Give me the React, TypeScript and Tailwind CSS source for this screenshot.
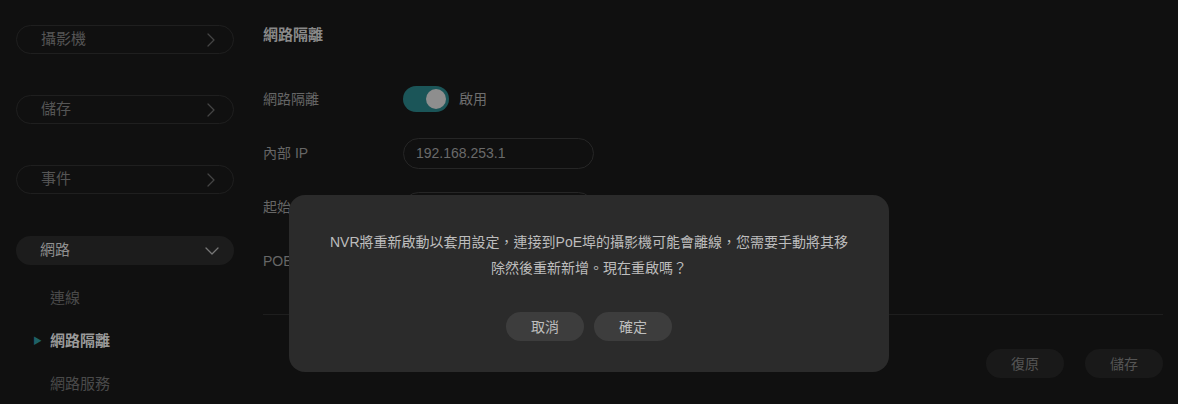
import React from 'react';
import { ChevronRight, ChevronDown } from 'lucide-react';

const font = { fontFamily: '"Liberation Sans", "Noto Sans CJK TC", sans-serif' };

function NavGroup({ label, open }: { label: string; open?: boolean }) {
  return (
    <div
      className={`mx-4 h-[29px] rounded-full flex items-center justify-between pl-6 pr-[10px] ${open ? 'bg-[#1c1c1c]' : 'border border-[#1f1f1f]'}`}
    >
      <span className={`text-[15px] ${open ? 'text-[#8f8f8f]' : 'text-[#555]'}`}>{label}</span>
      {open ? (
        <ChevronDown className="w-6 h-6 text-[#777]" strokeWidth={1.3} />
      ) : (
        <ChevronRight className="w-6 h-6 text-[#444]" strokeWidth={1.3} />
      )}
    </div>
  );
}

function SubItem({ label, active }: { label: string; active?: boolean }) {
  return (
    <div className="h-[43px] flex items-center pl-[33px]">
      <span className={`w-[17px] text-[9px] ${active ? 'text-[#1e6166]' : 'text-transparent'}`}>▶</span>
      <span className={`text-[15px] ${active ? 'text-[#9a9a9a] font-bold' : 'text-[#4a4a4a]'}`}>{label}</span>
    </div>
  );
}

function FieldRow({ label, children }: { label: string; children?: React.ReactNode }) {
  return (
    <div className="h-[54px] flex items-center">
      <span className="w-[140px] text-sm text-[#666]">{label}</span>
      {children}
    </div>
  );
}

export default function App() {
  return (
    <div className="relative w-[1178px] h-[404px] overflow-hidden bg-[#101010]" style={font}>
      <div className="flex h-full">
        {/* Sidebar */}
        <div className="w-[250px] shrink-0 pt-[25px]">
          <NavGroup label="攝影機" />
          <div className="h-[41px]" />
          <NavGroup label="儲存" />
          <div className="h-[41px]" />
          <NavGroup label="事件" />
          <div className="h-[42px]" />
          <NavGroup label="網路" open />
          <div className="h-[12px]" />
          <SubItem label="連線" />
          <SubItem label="網路隔離" active />
          <SubItem label="網路服務" />
        </div>

        {/* Main */}
        <div className="flex-1 pl-[13px] pr-[15px]">
          <div className="h-[72px] pt-[24px] text-[15px] font-bold text-[#8a8a8a]">網路隔離</div>
          <FieldRow label="網路隔離">
            <div className="w-[46px] h-[26px] rounded-full bg-[#1b5558] flex items-center justify-end pr-[3px]">
              <div className="w-[20px] h-[20px] rounded-full bg-[#8e8e8e]" />
            </div>
            <span className="ml-[10px] text-sm text-[#6e6e6e]">啟用</span>
          </FieldRow>
          <FieldRow label="內部 IP">
            <div className="w-[191px] h-[31px] rounded-full border border-[#262626] flex items-center px-3 text-sm text-[#6a6a6a]">
              192.168.253.1
            </div>
          </FieldRow>
          <FieldRow label="起始 IP">
            <div className="w-[191px] h-[31px] rounded-full border border-[#262626]" />
          </FieldRow>
          <FieldRow label="POE 埠">
            <div className="w-[191px] h-[31px]" />
          </FieldRow>
          <div className="mt-[26px] border-t border-[#1e1e1e]" />
          <div className="flex justify-end gap-[21px] pt-[34px]">
            <button className="w-[78px] h-[29px] rounded-full bg-[#191919] text-sm text-[#555]">復原</button>
            <button className="w-[78px] h-[29px] rounded-full bg-[#191919] text-sm text-[#555]">儲存</button>
          </div>
        </div>
      </div>

      {/* Dialog */}
      <div className="absolute left-[289px] top-[195px] w-[600px] h-[177px] rounded-2xl bg-[#2b2b2b] flex flex-col items-center">
        <p className="mt-[34px] px-10 text-center text-sm leading-[26px] text-[#bdbdbd]">
          NVR將重新啟動以套用設定，連接到PoE埠的攝影機可能會離線，您需要手動將其移
          <br />
          除然後重新新增。現在重啟嗎？
        </p>
        <div className="mt-[31px] flex gap-[10px]">
          <button className="w-[78px] h-[29px] rounded-full bg-[#3d3d3d] text-sm text-[#bdbdbd]">取消</button>
          <button className="w-[78px] h-[29px] rounded-full bg-[#3d3d3d] text-sm text-[#bdbdbd]">確定</button>
        </div>
      </div>
    </div>
  );
}
